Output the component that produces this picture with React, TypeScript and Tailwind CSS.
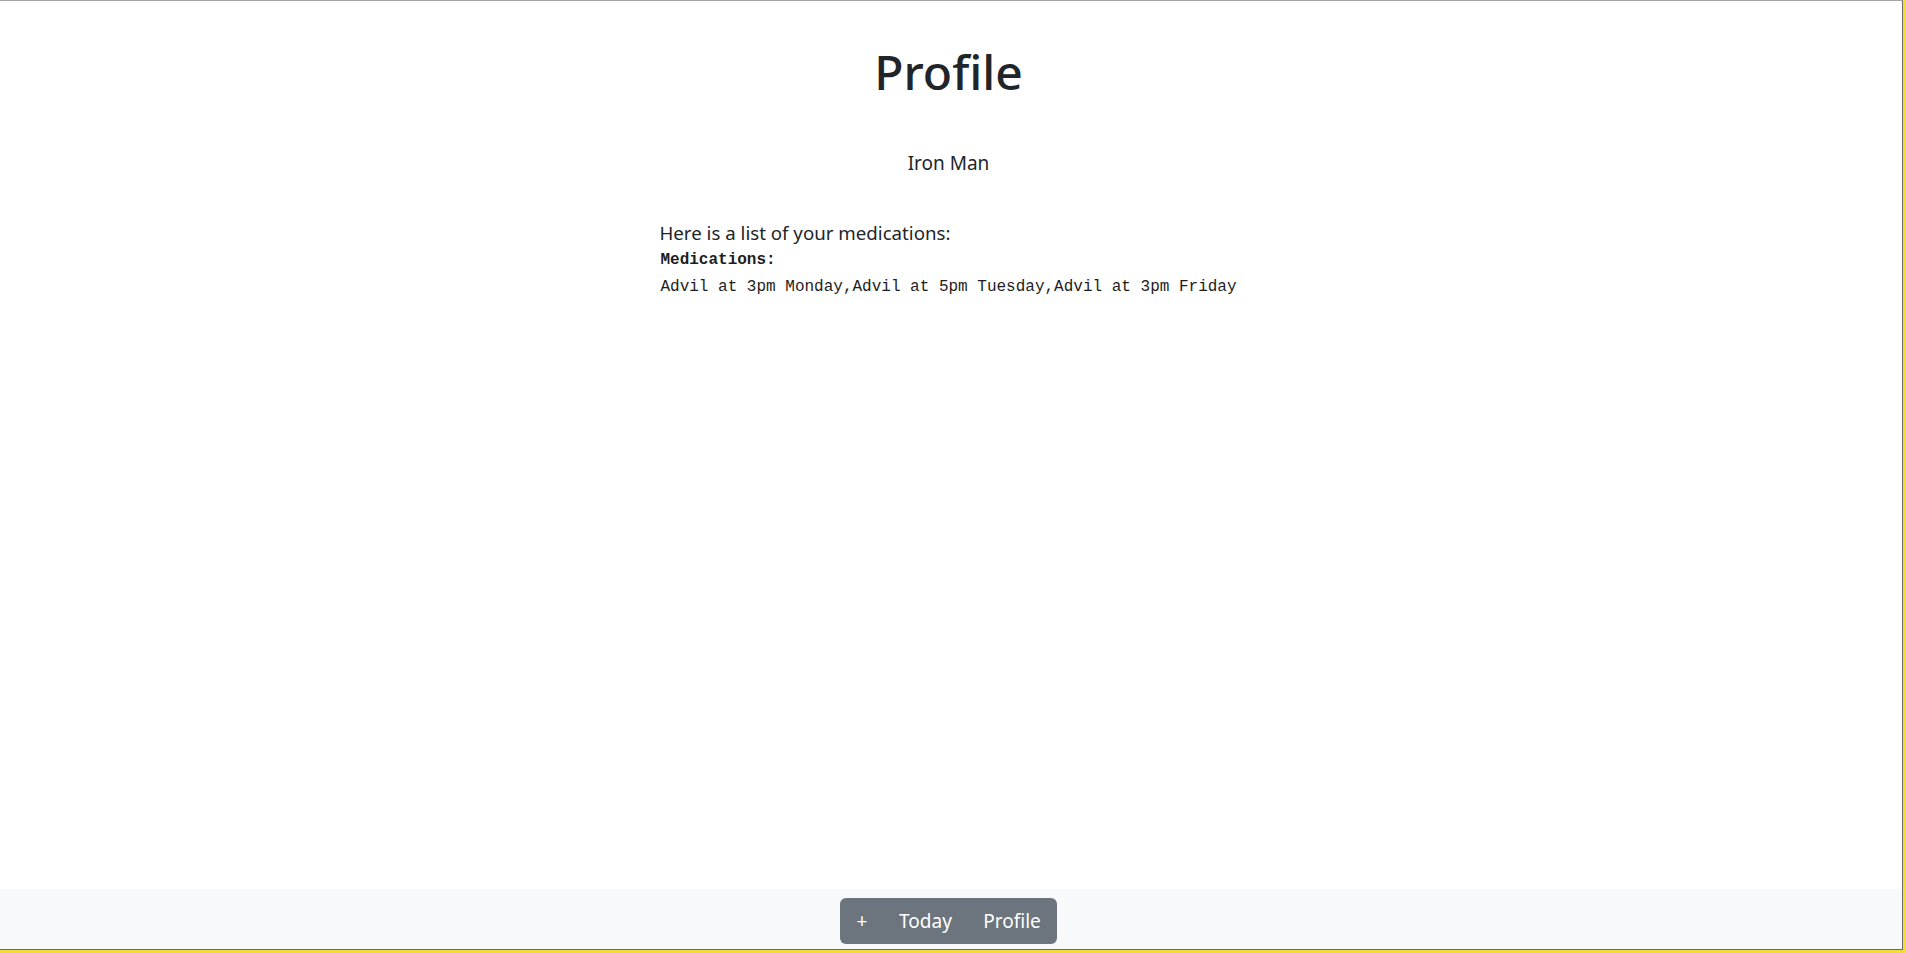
const medications = [
  "Advil at 3pm Monday",
  "Advil at 5pm Tuesday",
  "Advil at 3pm Friday"
]

const navButtons = [
  { label: "+", width: "w-[44px]" },
  { label: "Today", width: "w-[83px]" },
  { label: "Profile", width: "w-[90px]" }
]

export default function App() {
  return (
    <div className="flex h-[953px] w-full border-r-[3px] border-b-[3px] border-[#f1dc3e] bg-white font-['Noto_Sans',sans-serif] text-[#212529]">
      <div className="flex flex-1 flex-col border-t border-r border-b border-t-[#a3a3a3] border-r-[#6b6b6b] border-b-[#6b6b6b]">
        <main className="flex flex-1 flex-col items-center pr-[5px] pt-[42px]">
          <h1 className="text-[48px] font-medium leading-[57.6px]">Profile</h1>

          <p className="mt-[48px] text-[19px] leading-[28.8px]">Iron Man</p>

          <div className="mt-[42px] w-fit text-left">
            <p className="-ml-[1px] text-[18.7px] leading-[28.8px]">Here is a list of your medications:</p>
            <div className="font-['Liberation_Mono',monospace] text-[16px] leading-[27px] text-[#1d1d1d]">
              <div className="-mt-[1px] font-bold">Medications:</div>
              <div>{medications.join(",")}</div>
            </div>
          </div>
        </main>

        <footer className="flex h-[60px] justify-center bg-[#f8f9fa] pr-[5px] pt-[9px]">
          <div className="flex h-[46px] overflow-hidden rounded-[6px] bg-[#6c757d]">
            {navButtons.map((item) => (
              <button
                key={item.label}
                type="button"
                className={`${item.width} text-center text-[19px] leading-[46px] text-white`}
              >
                {item.label}
              </button>
            ))}
          </div>
        </footer>
      </div>
    </div>
  )
}
